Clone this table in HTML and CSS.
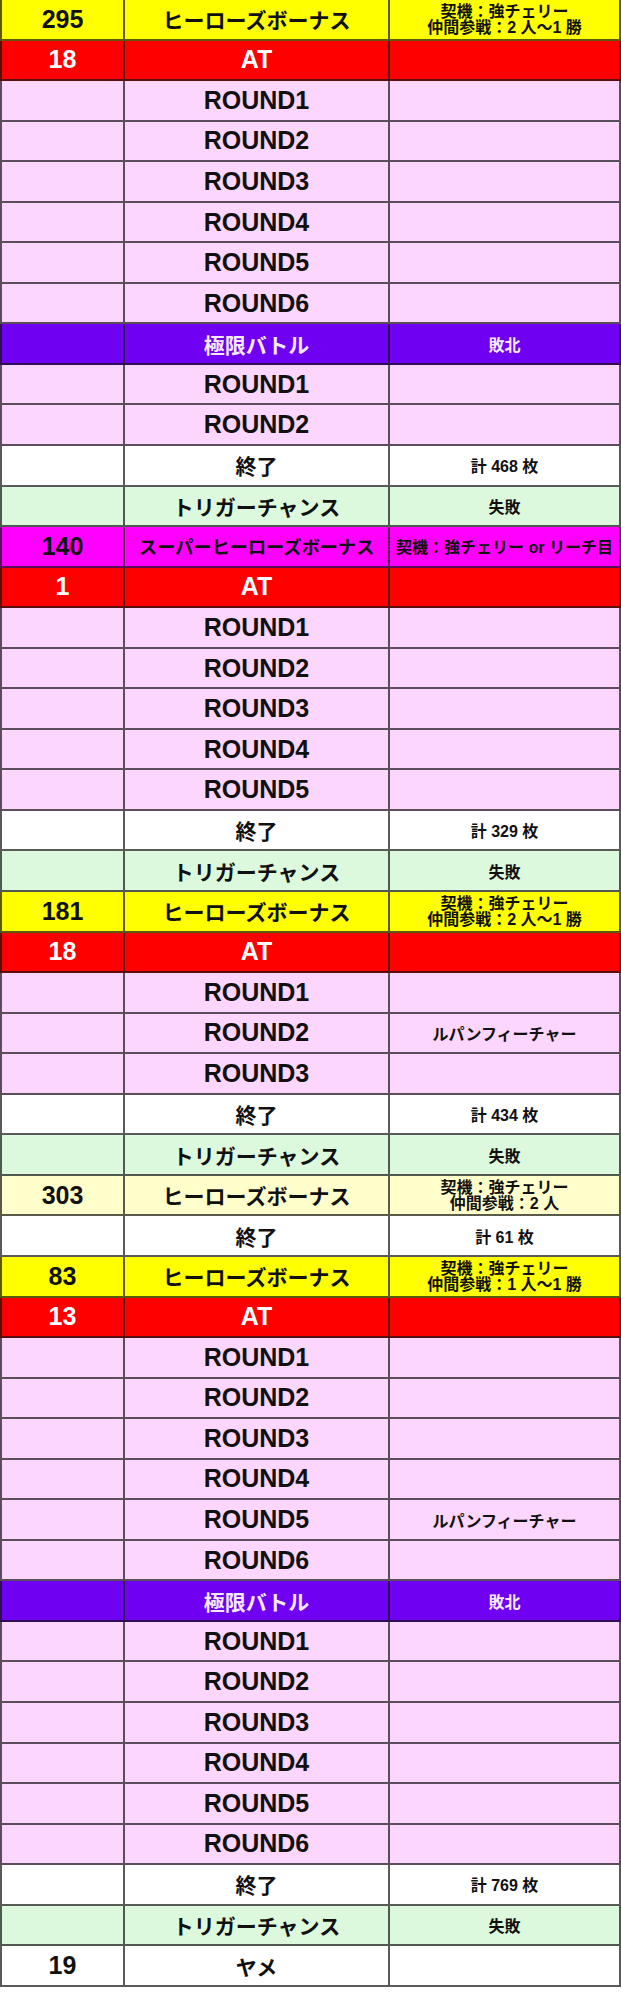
FILE: index.html
```html
<!DOCTYPE html>
<html lang="ja">
<head>
<meta charset="utf-8">
<title>実戦データ</title>
<link rel="stylesheet" href="styles.css">
</head>
<body>
<div class="sheet">
  <div class="row yellow"><div class="c1">295</div><div class="c2">ヒーローズボーナス</div><div class="c3 two">契機：強チェリー<br>仲間参戦：2 人〜1 勝</div></div>
  <div class="row red"><div class="c1">18</div><div class="c2 en">AT</div><div class="c3"></div></div>
  <div class="row pink"><div class="c1"></div><div class="c2 en">ROUND1</div><div class="c3"></div></div>
  <div class="row pink"><div class="c1"></div><div class="c2 en">ROUND2</div><div class="c3"></div></div>
  <div class="row pink"><div class="c1"></div><div class="c2 en">ROUND3</div><div class="c3"></div></div>
  <div class="row pink"><div class="c1"></div><div class="c2 en">ROUND4</div><div class="c3"></div></div>
  <div class="row pink"><div class="c1"></div><div class="c2 en">ROUND5</div><div class="c3"></div></div>
  <div class="row pink"><div class="c1"></div><div class="c2 en">ROUND6</div><div class="c3"></div></div>
  <div class="row purple"><div class="c1"></div><div class="c2">極限バトル</div><div class="c3">敗北</div></div>
  <div class="row pink"><div class="c1"></div><div class="c2 en">ROUND1</div><div class="c3"></div></div>
  <div class="row pink"><div class="c1"></div><div class="c2 en">ROUND2</div><div class="c3"></div></div>
  <div class="row white"><div class="c1"></div><div class="c2">終了</div><div class="c3">計 468 枚</div></div>
  <div class="row green"><div class="c1"></div><div class="c2">トリガーチャンス</div><div class="c3">失敗</div></div>
  <div class="row magenta"><div class="c1">140</div><div class="c2 small">スーパーヒーローズボーナス</div><div class="c3">契機：強チェリー or リーチ目</div></div>
  <div class="row red"><div class="c1">1</div><div class="c2 en">AT</div><div class="c3"></div></div>
  <div class="row pink"><div class="c1"></div><div class="c2 en">ROUND1</div><div class="c3"></div></div>
  <div class="row pink"><div class="c1"></div><div class="c2 en">ROUND2</div><div class="c3"></div></div>
  <div class="row pink"><div class="c1"></div><div class="c2 en">ROUND3</div><div class="c3"></div></div>
  <div class="row pink"><div class="c1"></div><div class="c2 en">ROUND4</div><div class="c3"></div></div>
  <div class="row pink"><div class="c1"></div><div class="c2 en">ROUND5</div><div class="c3"></div></div>
  <div class="row white"><div class="c1"></div><div class="c2">終了</div><div class="c3">計 329 枚</div></div>
  <div class="row green"><div class="c1"></div><div class="c2">トリガーチャンス</div><div class="c3">失敗</div></div>
  <div class="row yellow"><div class="c1">181</div><div class="c2">ヒーローズボーナス</div><div class="c3 two">契機：強チェリー<br>仲間参戦：2 人〜1 勝</div></div>
  <div class="row red"><div class="c1">18</div><div class="c2 en">AT</div><div class="c3"></div></div>
  <div class="row pink"><div class="c1"></div><div class="c2 en">ROUND1</div><div class="c3"></div></div>
  <div class="row pink"><div class="c1"></div><div class="c2 en">ROUND2</div><div class="c3">ルパンフィーチャー</div></div>
  <div class="row pink"><div class="c1"></div><div class="c2 en">ROUND3</div><div class="c3"></div></div>
  <div class="row white"><div class="c1"></div><div class="c2">終了</div><div class="c3">計 434 枚</div></div>
  <div class="row green"><div class="c1"></div><div class="c2">トリガーチャンス</div><div class="c3">失敗</div></div>
  <div class="row cream"><div class="c1">303</div><div class="c2">ヒーローズボーナス</div><div class="c3 two">契機：強チェリー<br>仲間参戦：2 人</div></div>
  <div class="row white"><div class="c1"></div><div class="c2">終了</div><div class="c3">計 61 枚</div></div>
  <div class="row yellow"><div class="c1">83</div><div class="c2">ヒーローズボーナス</div><div class="c3 two">契機：強チェリー<br>仲間参戦：1 人〜1 勝</div></div>
  <div class="row red"><div class="c1">13</div><div class="c2 en">AT</div><div class="c3"></div></div>
  <div class="row pink"><div class="c1"></div><div class="c2 en">ROUND1</div><div class="c3"></div></div>
  <div class="row pink"><div class="c1"></div><div class="c2 en">ROUND2</div><div class="c3"></div></div>
  <div class="row pink"><div class="c1"></div><div class="c2 en">ROUND3</div><div class="c3"></div></div>
  <div class="row pink"><div class="c1"></div><div class="c2 en">ROUND4</div><div class="c3"></div></div>
  <div class="row pink"><div class="c1"></div><div class="c2 en">ROUND5</div><div class="c3">ルパンフィーチャー</div></div>
  <div class="row pink"><div class="c1"></div><div class="c2 en">ROUND6</div><div class="c3"></div></div>
  <div class="row purple"><div class="c1"></div><div class="c2">極限バトル</div><div class="c3">敗北</div></div>
  <div class="row pink"><div class="c1"></div><div class="c2 en">ROUND1</div><div class="c3"></div></div>
  <div class="row pink"><div class="c1"></div><div class="c2 en">ROUND2</div><div class="c3"></div></div>
  <div class="row pink"><div class="c1"></div><div class="c2 en">ROUND3</div><div class="c3"></div></div>
  <div class="row pink"><div class="c1"></div><div class="c2 en">ROUND4</div><div class="c3"></div></div>
  <div class="row pink"><div class="c1"></div><div class="c2 en">ROUND5</div><div class="c3"></div></div>
  <div class="row pink"><div class="c1"></div><div class="c2 en">ROUND6</div><div class="c3"></div></div>
  <div class="row white"><div class="c1"></div><div class="c2">終了</div><div class="c3">計 769 枚</div></div>
  <div class="row green"><div class="c1"></div><div class="c2">トリガーチャンス</div><div class="c3">失敗</div></div>
  <div class="row white"><div class="c1">19</div><div class="c2">ヤメ</div><div class="c3"></div></div>
</div>
</body>
</html>
```

FILE: styles.css
```css
html, body {
  margin: 0;
  padding: 0;
  background: #ffffff;
}

body {
  width: 621px;
  font-family: "Liberation Sans", "Noto Sans CJK JP", sans-serif;
  font-weight: bold;
  color: #111111;
}

.sheet {
  display: flex;
  flex-direction: column;
  width: 621px;
}

.row {
  display: grid;
  grid-template-columns: 125px 265px 231px;
  height: 40.55px;
}

.row > div {
  box-sizing: border-box;
  display: flex;
  align-items: center;
  justify-content: center;
  text-align: center;
  border-right: 2px solid rgba(20, 20, 20, 0.7);
  border-bottom: 2px solid rgba(20, 20, 20, 0.7);
  overflow: hidden;
  white-space: nowrap;
}

.row > .c1 {
  border-left: 2px solid rgba(20, 20, 20, 0.7);
  font-size: 25px;
}

.c2 {
  font-size: 21px;
}

.c2.en {
  font-size: 25px;
}

.c2.small {
  font-size: 18.4px;
  letter-spacing: -0.2px;
}

.c3 {
  font-size: 16px;
}

.c3.two {
  line-height: 16px;
  font-size: 16px;
  padding-top: 1px;
}

.yellow { background: #ffff00; }
.cream { background: #ffffcc; }
.red { background: #ff0000; color: #ffffff; }
.pink { background: #fcd6fc; }
.purple { background: #6f00f2; color: #f6e8ff; }
.white { background: #ffffff; }
.green { background: #ddf9dd; }
.magenta { background: #ff00ff; }
```
